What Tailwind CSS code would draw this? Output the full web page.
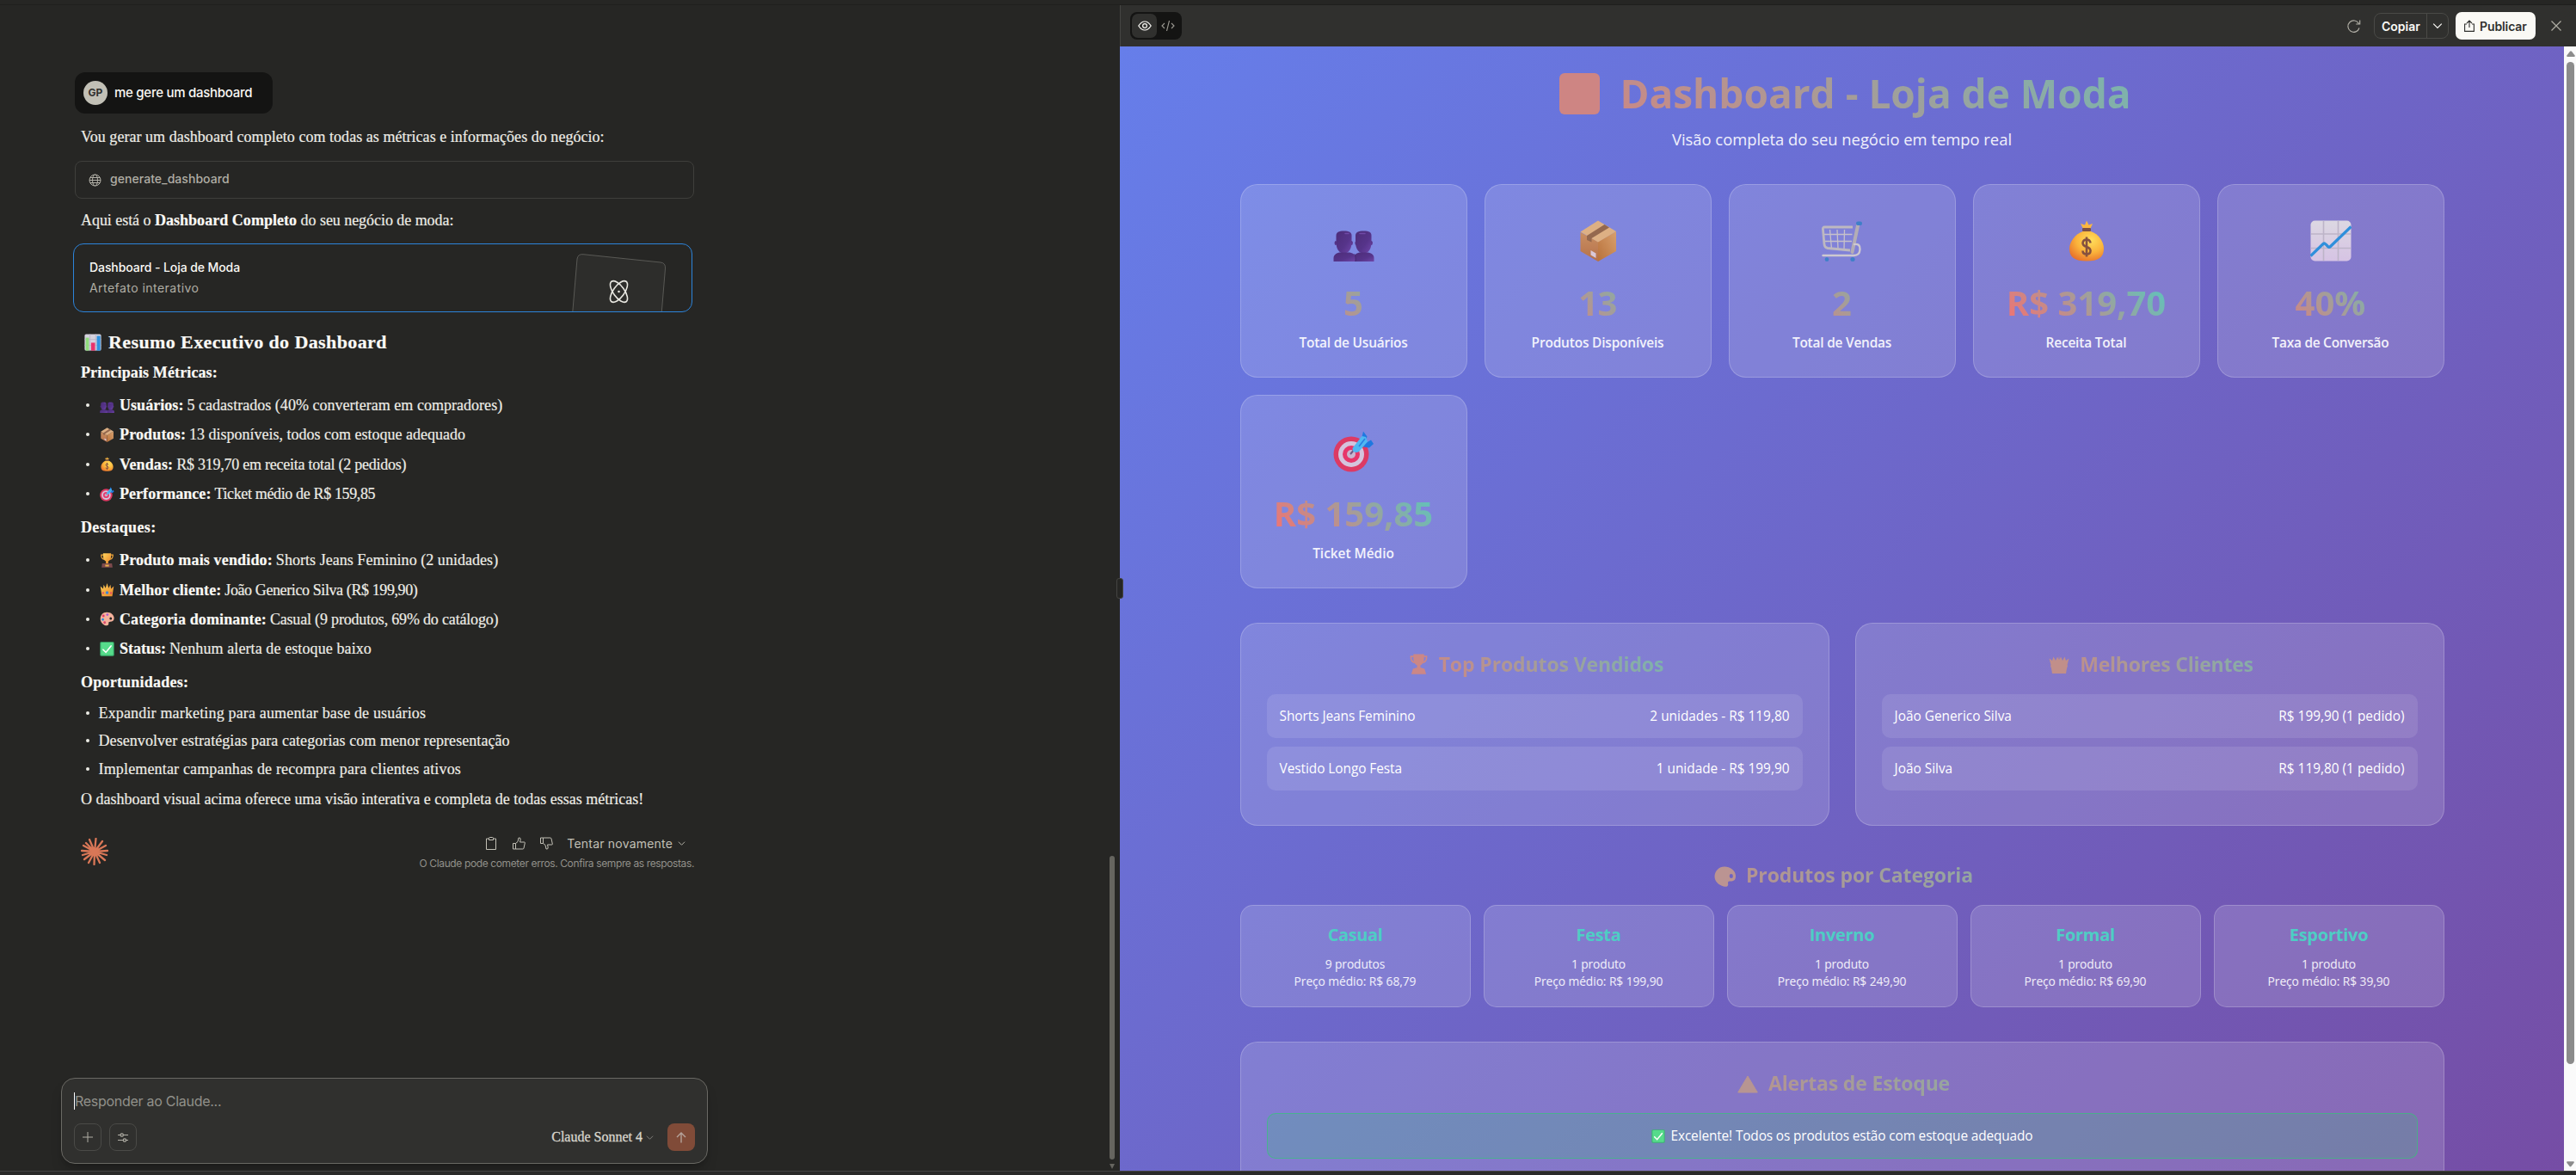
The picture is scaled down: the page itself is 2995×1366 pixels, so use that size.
<!DOCTYPE html>
<html lang="pt-BR">
<head>
<meta charset="utf-8">
<title>Dashboard - Loja de Moda</title>
<script src="https://cdn.jsdelivr.net/npm/@tailwindcss/browser@4"></script>
</head>
<body class="w-[2995px] h-[1366px] overflow-hidden bg-[#262624] font-['Inter',sans-serif] flex flex-col">
<svg class="absolute size-0">
  <defs>
    <linearGradient id="gUser" x1="0" y1="0" x2="1" y2="1"><stop offset="0" stop-color="#4c2c78"/><stop offset=".6" stop-color="#56348a"/><stop offset="1" stop-color="#6f45a8"/></linearGradient>
    <linearGradient id="gBoxL" x1="0" y1="0" x2="0" y2="1"><stop offset="0" stop-color="#c98f62"/><stop offset="1" stop-color="#b5704a"/></linearGradient>
    <linearGradient id="gBoxR" x1="0" y1="1" x2="1" y2="0"><stop offset="0" stop-color="#b8713a"/><stop offset="1" stop-color="#d8a06e"/></linearGradient>
    <radialGradient id="gBag" cx=".62" cy=".3" r=".75"><stop offset="0" stop-color="#ffdf5c"/><stop offset=".55" stop-color="#fbb33b"/><stop offset="1" stop-color="#e8742c"/></radialGradient>
    <linearGradient id="gChart" x1="0" y1="0" x2="0" y2="1"><stop offset="0" stop-color="#dcd8e2"/><stop offset="1" stop-color="#d6c3e4"/></linearGradient>
    <linearGradient id="gCup" x1="0" y1="0" x2="1" y2="1"><stop offset="0" stop-color="#ffd25a"/><stop offset="1" stop-color="#e8862a"/></linearGradient>
  </defs>
  <symbol id="users" viewBox="0 0 48 48">
    <g fill="url(#gUser)"><ellipse cx="27" cy="26.5" rx="1.6" ry="2.6"/><ellipse cx="44.5" cy="26.5" rx="1.4" ry="2.6"/><path d="M26 18c0-4 3-5.500 9.500-5.500S44.500 14 44.500 18v8c0 8-4 12.500-9 12.500S26 34 26 26z"/><path d="M24 48v-4c0-4 4-6.500 8-6.500h7c5 0 8.500 2.500 8.500 6.500v4z"/><ellipse cx="3" cy="26.500" rx="1.400" ry="2.600"/><ellipse cx="21.500" cy="26.500" rx="1.400" ry="2.600"/><path d="M3.500 18c0-4 3-5.500 9-5.500s9 1.500 9 5.500v8c0 8-4 12.500-9 12.500S3.500 34 3.500 26z"/><path d="M.5 48v-4c0-4 4-6.500 8-6.500h9c5 0 8.500 2.500 8.500 6.500v4z" /></g>
    <path d="M24.500 39c1 1.500 1.500 3 1.500 5v4h-1" fill="none" stroke="#432569" stroke-width=".8"/><path d="M14 15.500h4m13 0h6" stroke="#7049a6" stroke-width="1.500" stroke-linecap="round"/>
  </symbol>
  <symbol id="box" viewBox="0 0 48 48">
    <path d="M3.500 14L24 25v23L3.500 36z" fill="url(#gBoxL)"/><path d="M24 25l21-12v23L24 48z" fill="url(#gBoxR)"/><path d="M3.500 13.500L24 .5l21 12.500-21 12.500z" fill="#ddb084"/><path d="M11 18l20.500-13 5.500 3.500L16.500 21v4.500L11 23z" fill="#94684e"/><path d="M15.500 35l6 3.500v5.500l-6-3.500z" fill="#d9c8d8"/>
  </symbol>
  <symbol id="cart" viewBox="0 0 48 48">
    <g fill="none" stroke="#c6c1c9" stroke-width="1.300"><path d="M9.500 11l2 22M18 11l1 22M26.500 11l-.5 23M1.500 16.500h34M2 24.500h33"/></g>
    <path d="M36 8H3.500Q1 8 1.500 11l1.500 17q.3 4 4 4.500L33 35" fill="none" stroke="#bdb8c0" stroke-width="2.800"/><path d="M42.500 4L35.500 37" stroke="#b3adb5" stroke-width="4" stroke-linecap="round"/><path d="M38 28q7-1 6.500 6t-7 7H1.500" fill="none" stroke="#cdc8d0" stroke-width="2.400" stroke-linecap="round"/>
    <rect x="40" y="1.500" width="7" height="4.500" rx="2" fill="#3f7fc8"/><ellipse cx="6" cy="45.500" rx="2.300" ry="2.500" fill="#3f7fc8"/><ellipse cx="36" cy="45.500" rx="2.600" ry="2.500" fill="#3f7fc8"/>
  </symbol>
  <symbol id="bag" viewBox="0 0 48 48">
    <path d="M19.500 9L17 4l5 1.500L24 .5 26.500 5.500 31 4l-2.500 5.500z" fill="#fbb741"/><path d="M19.500 13h9.500C38 16 44 25 44 33c0 10-6 14.500-20 14.500S4 43 4 33c0-8 7-17 15.500-20z" fill="url(#gBag)"/><rect x="19" y="9" width="10" height="4" rx="1.200" fill="#7b4f45"/>
    <path d="M28.500 26.500q-.5-4-4.500-4t-4.500 4q0 3 4.500 4.500t4.500 4.500q0 4-4.500 4t-4.500-4M24 19.500v23" fill="none" stroke="#85513f" stroke-width="2.600"/>
  </symbol>
  <symbol id="trend" viewBox="0 0 48 48">
    <rect x=".5" y=".5" width="47" height="47" rx="5" fill="url(#gChart)"/><path d="M15.500 1v46M32.500 1v46M1 16h46M1 32.500h46" stroke="#bdb4c8" stroke-width="1.600"/><path d="M.5 41.500L15 27.500q1.500-1.200 3 .5l2.500 2.500q1.500 1.500 3 0L47.500 7.500" fill="none" stroke="#2f8fdb" stroke-width="3.200"/>
  </symbol>
  <symbol id="target" viewBox="0 0 48 48">
    <circle cx="21" cy="27" r="20.500" fill="#dd3a63"/><circle cx="21" cy="27" r="15" fill="#d4c4dd"/><circle cx="21" cy="27" r="10" fill="#e7366a"/><circle cx="21" cy="27" r="5" fill="#c9b6cf"/><path d="M20 27l5-6" stroke="#6f5a86" stroke-width="2"/>
    <path d="M33 9L35 .5l4.500 6-3 8zM38 14l6-3.500 3 4.500-5 4.500-7-1z" fill="#1f78e0"/><path d="M22.500 20l11-14 4.500 1 2 5.500L30 24q-4 2-7-.5z" fill="#4fb8f2"/><path d="M30 18l7-9" stroke="#2a7fe0" stroke-width="1.600"/>
  </symbol>
  <symbol id="check" viewBox="0 0 48 48"><rect x="1" y="1" width="46" height="46" rx="4" fill="#3cb572"/><rect x="4" y="3" width="40" height="41" rx="3" fill="#56db8b"/><path d="M11 26l9 9 17-21" fill="none" stroke="#fff" stroke-width="4.500" stroke-linecap="round"/></symbol>
  <symbol id="bars" viewBox="0 0 48 48"><rect x="1" y="1" width="46" height="46" rx="4" fill="#d5d2de"/><path d="M1 16h46M1 32h46M16 1v46M32 1v46" stroke="#b9b4c6" stroke-width="2"/><rect x="4" y="11" width="9" height="36" fill="#8fdc7c"/><rect x="19" y="25" width="11" height="22" fill="#e8336d"/><rect x="35" y="6" width="10" height="41" fill="#2f92e0"/></symbol>
  <symbol id="cup" viewBox="0 0 48 48"><path d="M12 6H5q-1 14 12 15M36 6h7q1 14-12 15" fill="none" stroke="#f0a63a" stroke-width="3.500"/><path d="M11 1h26v9q0 13-9 17v8h-8v-8q-9-4-9-17z" fill="url(#gCup)"/><path d="M8 34h32l2 13.500H6z" fill="#7d4a4c"/><rect x="18" y="38" width="12" height="6" fill="#e9b04a"/></symbol>
  <symbol id="crown" viewBox="0 0 48 48"><path d="M7 46L2 13l9 8 2-13 6 11L24 3l5 16 6-11 2 13 9-8-5 33z" fill="url(#gCup)"/><circle cx="24" cy="34" r="5" fill="#3f86d8"/><circle cx="11" cy="35" r="3" fill="#e0466c"/><circle cx="37" cy="35" r="3" fill="#e0466c"/></symbol>
  <symbol id="palette" viewBox="0 0 48 48"><path fill-rule="evenodd" d="M23 2C10 2 2 12 2 24c0 11 9 20 18 22 6 1 10-2 9-7-.500-4 1-6 5-6 8 0 13-3 13-11C47 10 36 2 23 2zm13 16a4 4.500 0 1 1 0 9 4 4.500 0 0 1 0-9z" fill="#f5b29c"/><circle cx="25" cy="10" r="4" fill="#a85fd0"/><circle cx="12" cy="14" r="4" fill="#e23b6b"/><circle cx="10" cy="26" r="4" fill="#2f8fdb"/><circle cx="16" cy="36" r="4" fill="#d8456c"/></symbol>
  <symbol id="chev" viewBox="0 0 10 10"><path d="M1 3l4 4 4-4" fill="none" stroke="currentColor" stroke-width="1"/></symbol>
</svg>

<div class="h-[5px] bg-[#262624]"></div>
<div class="h-px bg-[#1f1f1d]"></div>

<div class="h-[1355px] flex">
  <!-- conversation -->
  <section class="w-[1302px] h-full flex justify-between pt-[78px]">
    <div class="w-[830px] flex flex-col pl-[72px]">
      <div class="ml-[15px] w-[230px] h-12 rounded-xl bg-[#141413] flex items-center pl-[10px]">
        <div class="size-7 rounded-full bg-[#c2c0b6] text-[#30302e] text-[12px] font-bold flex items-center justify-center">GP</div>
        <div class="ml-2 text-[15px] font-medium text-[#faf9f5] tracking-[-0.27px]">me gere um dashboard</div>
      </div>
      <div class="font-['Liberation_Serif',serif] text-[18px] leading-6 text-[#edece6] whitespace-nowrap [-webkit-text-stroke:0.2px_currentColor]">
        <p class="ml-[22px] mt-[15px] tracking-[0.04px]">Vou gerar um dashboard completo com todas as métricas e informações do negócio:</p>
        <div class="ml-[15px] mt-4 w-[720px] h-11 rounded-lg border border-[#3f3f3c] flex items-center pl-[15px] font-['Inter',sans-serif] text-[14px] font-medium text-[#b0aea5] [-webkit-text-stroke:0]">
          <svg class="size-[15px]" viewBox="0 0 15 15" fill="none" stroke="currentColor" stroke-width="1"><circle cx="7.500" cy="7.500" r="6.500"/><ellipse cx="7.500" cy="7.500" rx="3" ry="6.500"/><path d="M1 7.500h13M2 4.500h11M2 10.500h11"/></svg>
          <span class="ml-[10px] -mt-[2px] tracking-[0.05px]">generate_dashboard</span>
        </div>
        <p class="ml-[22px] mt-[13px] tracking-[-0.05px]">Aqui está o <b class="text-[#faf9f5] tracking-[0.04px]">Dashboard Completo</b> do seu negócio de moda:</p>
        <div class="ml-[13px] mt-[15px] w-[720px] h-20 rounded-xl border border-[#2c84db] flex justify-between overflow-hidden font-['Inter',sans-serif] text-[14px] pl-[18px] [-webkit-text-stroke:0]">
          <div class="pt-[15px]">
            <p class="font-medium text-[#faf9f5] tracking-[-0.08px]">Dashboard - Loja de Moda</p>
            <p class="text-[#b0aea5] tracking-[0.46px]">Artefato interativo</p>
          </div>
          <svg class="w-[142px] h-[78px]" viewBox="0 0 142 78" fill="none">
            <path d="M3.500 82L9 17Q10 11 16 11.700L106 21Q112 21.700 111.500 28L107 82z" fill="#2d2d2b" stroke="#5a5a56"/>
            <g stroke="#e8e7e1" stroke-width="1.600"><ellipse cx="57.500" cy="55" rx="6.500" ry="14.500" transform="rotate(36 57.500 55)"/><ellipse cx="57.500" cy="55" rx="6.500" ry="14.500" transform="rotate(-36 57.500 55)"/></g><circle cx="57.500" cy="55" r="1.300" fill="#e8e7e1"/>
          </svg>
        </div>
        <div class="ml-[26px] mt-[21px] h-7 flex items-center text-[22px] leading-7 font-bold text-[#faf9f5]"><svg class="size-5 mr-2"><use href="#bars"/></svg><span class="tracking-[0.4px]">Resumo Executivo do Dashboard</span></div>
        <p class="ml-[22px] mt-[9px] font-bold text-[#faf9f5] tracking-[0.12px]">Principais Métricas:</p>
        <ul class="ml-[28px] mt-[14px] flex flex-col gap-[10.400px]">
          <li class="flex items-center h-6"><i class="size-1 rounded-full bg-[#edece6]"></i><svg class="ml-[12px] mr-[6px] size-[17px]"><use href="#users"/></svg><b class="text-[#faf9f5] mr-1 tracking-[0.05px]">Usuários:</b><span class="tracking-[0.03px]">5 cadastrados (40% converteram em compradores)</span></li>
          <li class="flex items-center h-6"><i class="size-1 rounded-full bg-[#edece6]"></i><svg class="ml-[12px] mr-[6px] size-[17px]"><use href="#box"/></svg><b class="text-[#faf9f5] mr-1 tracking-[0.15px]">Produtos:</b>13 disponíveis, todos com estoque adequado</li>
          <li class="flex items-center h-6"><i class="size-1 rounded-full bg-[#edece6]"></i><svg class="ml-[12px] mr-[6px] size-[17px]"><use href="#bag"/></svg><b class="text-[#faf9f5] mr-1 tracking-[0.12px]">Vendas:</b><span class="tracking-[-0.25px]">R$ 319,70 em receita total (2 pedidos)</span></li>
          <li class="flex items-center h-6"><i class="size-1 rounded-full bg-[#edece6]"></i><svg class="ml-[12px] mr-[6px] size-[17px]"><use href="#target"/></svg><b class="text-[#faf9f5] mr-1 tracking-[0.04px]">Performance:</b><span class="tracking-[-0.36px]">Ticket médio de R$ 159,85</span></li>
        </ul>
        <p class="ml-[22px] mt-[15px] font-bold text-[#faf9f5] tracking-[0.35px]">Destaques:</p>
        <ul class="ml-[28px] mt-[14px] flex flex-col gap-[10.400px]">
          <li class="flex items-center h-6"><i class="size-1 rounded-full bg-[#edece6]"></i><svg class="ml-[12px] mr-[6px] size-[17px]"><use href="#cup"/></svg><b class="text-[#faf9f5] mr-1 tracking-[0.15px]">Produto mais vendido:</b><span class="tracking-[0.04px]">Shorts Jeans Feminino (2 unidades)</span></li>
          <li class="flex items-center h-6"><i class="size-1 rounded-full bg-[#edece6]"></i><svg class="ml-[12px] mr-[6px] size-[17px]"><use href="#crown"/></svg><b class="text-[#faf9f5] mr-1 tracking-[0.08px]">Melhor cliente:</b><span class="tracking-[-0.4px]">João Generico Silva (R$ 199,90)</span></li>
          <li class="flex items-center h-6"><i class="size-1 rounded-full bg-[#edece6]"></i><svg class="ml-[12px] mr-[6px] size-[17px]"><use href="#palette"/></svg><b class="text-[#faf9f5] mr-1 tracking-[0.12px]">Categoria dominante:</b><span class="tracking-[-0.18px]">Casual (9 produtos, 69% do catálogo)</span></li>
          <li class="flex items-center h-6"><i class="size-1 rounded-full bg-[#edece6]"></i><svg class="ml-[12px] mr-[6px] size-[17px]"><use href="#check"/></svg><b class="text-[#faf9f5] mr-1">Status:</b><span class="tracking-[0.1px]">Nenhum alerta de estoque baixo</span></li>
        </ul>
        <p class="ml-[22px] mt-[15px] font-bold text-[#faf9f5] tracking-[0.22px]">Oportunidades:</p>
        <ul class="ml-[28px] mt-[11.500px] flex flex-col gap-[8.600px]">
          <li class="flex items-center h-6"><i class="size-1 rounded-full bg-[#edece6] mr-[10.500px]"></i><span class="tracking-[0.16px]">Expandir marketing para aumentar base de usuários</span></li>
          <li class="flex items-center h-6"><i class="size-1 rounded-full bg-[#edece6] mr-[10.500px]"></i><span class="tracking-[0.07px]">Desenvolver estratégias para categorias com menor representação</span></li>
          <li class="flex items-center h-6"><i class="size-1 rounded-full bg-[#edece6] mr-[10.500px]"></i><span class="tracking-[0.16px]">Implementar campanhas de recompra para clientes ativos</span></li>
        </ul>
        <p class="ml-[22px] mt-[10.500px]">O dashboard visual acima oferece uma visão interativa e completa de todas essas métricas!</p>
      </div>
      <div class="mt-[27px] ml-[22px] w-[713px] flex justify-between">
        <svg class="mt-[6px] size-8" viewBox="-16 -16 32 32" stroke="#d97757" stroke-width="2.300" stroke-linecap="round"><path d="M0 0L-6-14M0 0L1.500-15M0 0L9-12M0 0L13-7M0 0L15-1M0 0L14 4M0 0L12 10M0 0L6 13M0 0L-.5 15M0 0L-7 13M0 0L-12 9M0 0L-14 4M0 0L-15-1M0 0L-13-7M0 0L-10-10"/><circle r="3.500" fill="#d97757" stroke="none"/></svg>
        <div class="flex flex-col items-end text-[#c2c0b6]">
          <div class="h-[26px] flex items-center pr-[10px]">
            <svg class="w-3 h-[15px]" viewBox="0 0 12 15" fill="none" stroke="currentColor"><path d="M3.500 2H.5v12.500h11V2h-3M3.500 1.500q0-1 1-1h3q1 0 1 1v2h-5z"/></svg>
            <svg class="ml-[19px] size-[15px]" viewBox="0 0 15 15" fill="none" stroke="currentColor"><path d="M.5 7.500h3v6.500h-3zM3.500 7.500L6 5.500 7 1q2.500-.5 2.200 2L8.500 6h5q1 0 .8 1l-1.300 6q-.2 1-1.200 1H3.500"/></svg>
            <svg class="ml-[17px] size-[15px] rotate-180 -scale-x-100" viewBox="0 0 15 15" fill="none" stroke="currentColor"><path d="M.5 7.500h3v6.500h-3zM3.500 7.500L6 5.500 7 1q2.500-.5 2.200 2L8.500 6h5q1 0 .8 1l-1.300 6q-.2 1-1.200 1H3.500"/></svg>
            <span class="ml-[16px] text-[14px] leading-5 tracking-[0.2px]">Tentar novamente</span>
            <svg class="ml-[6px] size-[9px]"><use href="#chev"/></svg>
          </div>
          <p class="mt-[2px] text-[12px] leading-4 text-[#91908a] tracking-[-0.38px]">O Claude pode cometer erros. Confira sempre as respostas.</p>
        </div>
      </div>
      <div class="-ml-px mt-auto mb-[8px] w-[752px] h-[100px] rounded-2xl border border-[#6a6964] bg-[#30302e] shadow-lg shadow-black/20 flex flex-col pl-[14px] pr-[14px]">
        <div class="mt-[16px] h-5 flex items-center"><i class="w-px h-5 bg-white"></i><span class="text-[16px] text-[#91908a] tracking-[-0.28px]">Responder ao Claude...</span></div>
        <div class="mt-4 flex items-center text-[#b0aea5]">
          <div class="size-8 rounded-lg border border-[#4a4a47] flex items-center justify-center"><svg class="size-3" viewBox="0 0 12 12" stroke="currentColor"><path d="M6 0v12M0 6h12"/></svg></div>
          <div class="ml-[9px] size-8 rounded-lg border border-[#4a4a47] flex items-center justify-center"><svg class="w-3 h-[11px]" viewBox="0 0 12 11" fill="none" stroke="currentColor" stroke-width="1.200"><path d="M0 2.500h3M6.500 2.500H12M0 8.500h6M9.500 8.500H12"/><circle cx="4.700" cy="2.500" r="1.700"/><circle cx="7.900" cy="8.500" r="1.700"/></svg></div>
          <span class="ml-auto font-['Liberation_Serif',serif] text-[16px] text-[#d8d6cd] [-webkit-text-stroke:0.3px_#d8d6cd]">Claude Sonnet 4</span>
          <svg class="ml-1 size-[9px] text-[#8a8983]"><use href="#chev"/></svg>
          <div class="ml-[16px] size-8 rounded-lg bg-[#804b38] flex items-center justify-center"><svg class="w-3 h-[13px]" viewBox="0 0 12 13" fill="none" stroke="#b5a39b" stroke-width="1.400"><path d="M6 12.500V1M1 6l5-5 5 5"/></svg></div>
        </div>
      </div>
    </div>
    <div class="w-3 flex flex-col items-start justify-end">
      <div class="w-[6px] h-[353px] rounded-full bg-[#66655f]"></div>
      <svg class="mt-[5px] mb-[2px] w-[6px] h-[6px]" viewBox="0 0 6 6"><path d="M0 0h6L3 6z" fill="#66655f"/></svg>
    </div>
  </section>

  <!-- artifact -->
  <section class="relative w-[1693px] h-full flex flex-col">
    <header class="h-12 bg-[#30302e] border-l border-[#454542] flex items-center justify-between pl-[11px] pr-[17px] text-[14px] font-semibold">
      <div class="w-[60px] h-8 rounded-lg bg-[#141413] flex items-center p-[2px]">
        <div class="w-[29px] h-7 rounded-[7px] bg-[#30302e] flex items-center justify-center"><svg class="w-4 h-3" viewBox="0 0 16 12" fill="none" stroke="#faf9f5" stroke-width="1.200"><path d="M.8 6Q4 1 8 1t7.200 5Q12 11 8 11T.8 6z"/><circle cx="8" cy="6" r="2.400"/></svg></div>
        <svg class="ml-[5px] w-4 h-3" viewBox="0 0 16 12" fill="none" stroke="#9c9a92" stroke-width="1.100"><path d="M4 3L1 6l3 3M12 3l3 3-3 3M9.500 0l-3 12"/></svg>
      </div>
      <div class="flex items-center text-[#faf9f5]">
        <svg class="size-[17px]" viewBox="0 0 17 17" fill="none" stroke="#b0aea5" stroke-width="1.200"><path d="M15 10.500A6.700 6.700 0 1 1 14.500 5.500M15.700 1.500V6h-4.500"/></svg>
        <div class="ml-[15px] w-[87px] h-[30px] rounded-lg border border-[#4a4a47] flex items-center">
          <span class="pl-2 w-[61px] h-full border-r border-[#4a4a47] flex items-center">Copiar</span><svg class="ml-[6px] size-3"><use href="#chev"/></svg>
        </div>
        <div class="ml-2 w-[93px] h-8 rounded-[7px] bg-[#faf9f5] text-[#30302e] flex items-center pl-[10px]">
          <svg class="w-3 h-[14px]" viewBox="0 0 12 14" fill="none" stroke="currentColor" stroke-width="1.100"><path d="M3 5H.6v8.400h10.800V5H9M6 9V1M3 4l3-3 3 3"/></svg><span class="ml-[6px] tracking-[-0.1px]">Publicar</span>
        </div>
        <svg class="ml-[18px] size-3" viewBox="0 0 12 12" stroke="#b0aea5" stroke-width="1.200"><path d="M.5.5l11 11M11.500.5l-11 11"/></svg>
      </div>
    </header>
    <div class="h-[1307px] flex">
      <div class="w-[1679px] h-[1307px] overflow-hidden">
        <div class="h-[1428px] bg-[linear-gradient(135deg,#667eea_0%,#764ba2_100%)] flex justify-center font-['Open_Sans',sans-serif] text-white">
          <main class="w-[1400px] pt-5">
            <h1 class="h-[67px] flex items-center justify-center pl-2 text-[46px] font-bold text-transparent bg-clip-text bg-[linear-gradient(45deg,#ff6b6b,#4ecdc4)]"><svg class="w-[47px] h-12 mr-[23px] mt-[3px]"><rect width="47" height="48" rx="6" fill="#ce8583"/></svg><span class="pt-px">Dashboard - Loja de Moda</span></h1>
            <p class="mt-2 h-[26px] leading-[26px] text-center text-[18.400px] text-white/90">Visão completa do seu negócio em tempo real</p>

            <div class="mt-[39px] grid grid-cols-5 gap-5 text-[15.400px]">
              <div class="h-[225px] rounded-[20px] border border-white/20 bg-white/15 pt-[41px] px-6 text-center"><svg class="size-12 mx-auto"><use href="#users"/></svg><div class="mt-5 h-[55px] leading-[55px] text-[40px] font-bold text-transparent bg-clip-text bg-[linear-gradient(45deg,#ff6b6b,#4ecdc4)]">5</div><div class="mt-2 h-[22px] leading-[23px] font-semibold tracking-[-0.190px] text-white/90">Total de Usuários</div></div>
              <div class="h-[225px] rounded-[20px] border border-white/20 bg-white/15 pt-[41px] px-6 text-center"><svg class="size-12 mx-auto"><use href="#box"/></svg><div class="mt-5 h-[55px] leading-[55px] text-[40px] font-bold text-transparent bg-clip-text bg-[linear-gradient(45deg,#ff6b6b,#4ecdc4)] tracking-[-0.500px]">13</div><div class="mt-2 h-[22px] leading-[23px] font-semibold tracking-[-0.150px] text-white/90">Produtos Disponíveis</div></div>
              <div class="h-[225px] rounded-[20px] border border-white/20 bg-white/15 pt-[41px] px-6 text-center"><svg class="size-12 mx-auto"><use href="#cart"/></svg><div class="mt-5 h-[55px] leading-[55px] text-[40px] font-bold text-transparent bg-clip-text bg-[linear-gradient(45deg,#ff6b6b,#4ecdc4)]">2</div><div class="mt-2 h-[22px] leading-[23px] font-semibold tracking-[-0.190px] text-white/90">Total de Vendas</div></div>
              <div class="h-[225px] rounded-[20px] border border-white/20 bg-white/15 pt-[41px] px-6 text-center"><svg class="size-12 mx-auto"><use href="#bag"/></svg><div class="mt-5 h-[55px] leading-[55px] text-[40px] font-bold text-transparent bg-clip-text bg-[linear-gradient(45deg,#ff6b6b,#4ecdc4)]">R$ 319,70</div><div class="mt-2 h-[22px] leading-[23px] font-semibold tracking-[-0.150px] text-white/90">Receita Total</div></div>
              <div class="h-[225px] rounded-[20px] border border-white/20 bg-white/15 pt-[41px] px-6 text-center"><svg class="size-12 mx-auto"><use href="#trend"/></svg><div class="mt-5 h-[55px] leading-[55px] text-[40px] font-bold text-transparent bg-clip-text bg-[linear-gradient(45deg,#ff6b6b,#4ecdc4)]">40%</div><div class="mt-2 h-[22px] leading-[23px] font-semibold tracking-[-0.240px] text-white/90">Taxa de Conversão</div></div>
              <div class="h-[225px] rounded-[20px] border border-white/20 bg-white/15 pt-[41px] px-6 text-center"><svg class="size-12 mx-auto"><use href="#target"/></svg><div class="mt-5 h-[55px] leading-[55px] text-[40px] font-bold text-transparent bg-clip-text bg-[linear-gradient(45deg,#ff6b6b,#4ecdc4)]">R$ 159,85</div><div class="mt-2 h-[22px] leading-[23px] font-semibold text-white/90">Ticket Médio</div></div>
            </div>

            <div class="mt-10 grid grid-cols-2 gap-[30px] text-[15.400px]">
              <div class="h-[236px] rounded-[20px] border border-white/20 bg-white/15 p-[30px]">
                <h3 class="h-[33px] flex items-center justify-center pl-1 text-[23px] font-bold text-transparent bg-clip-text bg-[linear-gradient(45deg,#ff6b6b,#4ecdc4)]"><svg class="w-[23px] h-6 mr-3" viewBox="0 0 48 48" preserveAspectRatio="none"><path d="M12 6H5q-1 14 12 15M36 6h7q1 14-12 15" fill="none" stroke="#cc8786" stroke-width="3.500"/><path d="M11 1h26v9q0 13-9 17v5l10 3 4 12.500H6L10 35l10-3v-5q-9-4-9-17z" fill="#cc8786"/></svg><span class="pt-px tracking-[-0.110px]">Top Produtos Vendidos</span></h3>
                <div class="mt-[19px] h-[51px] rounded-[10px] bg-white/10 px-[15px] pt-px flex items-center justify-between"><span class="tracking-[-0.050px]">Shorts Jeans Feminino</span><span>2 unidades - R$ 119,80</span></div>
                <div class="mt-[10px] h-[51px] rounded-[10px] bg-white/10 px-[15px] pt-px flex items-center justify-between"><span class="tracking-[-0.050px]">Vestido Longo Festa</span><span>1 unidade - R$ 199,90</span></div>
              </div>
              <div class="h-[236px] rounded-[20px] border border-white/20 bg-white/15 p-[30px]">
                <h3 class="h-[33px] flex items-center justify-center pl-1 text-[23px] font-bold text-transparent bg-clip-text bg-[linear-gradient(45deg,#ff6b6b,#4ecdc4)]"><svg class="w-6 h-6 mr-3" viewBox="0 0 48 48"><path d="M8 46L6 34l-2-6 1-2L1 11l7 5 3-9 5 9 4-9 3 7 1-11 1 11 3-7 4 9 5-9 3 9 7-5-4 15 1 2-2 6-2 12z" fill="#c18f8a"/></svg><span class="pt-px tracking-[-0.240px]">Melhores Clientes</span></h3>
                <div class="mt-[19px] h-[51px] rounded-[10px] bg-white/10 px-[15px] pt-px flex items-center justify-between"><span>João Generico Silva</span><span>R$ 199,90 (1 pedido)</span></div>
                <div class="mt-[10px] h-[51px] rounded-[10px] bg-white/10 px-[15px] pt-px flex items-center justify-between"><span>João Silva</span><span>R$ 119,80 (1 pedido)</span></div>
              </div>
            </div>

            <h3 class="mt-10 h-[33px] flex items-center justify-center pl-1 text-[23px] font-bold text-transparent bg-clip-text bg-[linear-gradient(45deg,#ff6b6b,#4ecdc4)]"><svg class="w-[25px] h-6 mr-3 mt-1" viewBox="0 0 48 48" preserveAspectRatio="none"><path fill-rule="evenodd" d="M23 1C10 1 1 12 1 24c0 11 9 20 20 23 7 2 11-1 10-6-1-5 1-6 5-6 8 0 12-3 12-12C48 10 36 1 23 1zm15 17a4 5 0 1 1 0 10 4 5 0 0 1 0-10z" fill="#bb9492"/></svg><span class="pt-px tracking-[-0.110px]">Produtos por Categoria</span></h3>
            <div class="mt-[19px] grid grid-cols-5 gap-[15px] text-center text-[13.800px] leading-5 text-white/90">
              <div class="h-[119px] rounded-[15px] border border-white/20 bg-white/15 pt-5"><h4 class="h-[28px] leading-[28px] text-[20px] font-bold text-[#4ecdc4] tracking-[-0.4px]">Casual</h4><p class="mt-[10px] tracking-[-0.110px]">9 produtos</p><p class="tracking-[-0.070px]">Preço médio: R$ 68,79</p></div>
              <div class="h-[119px] rounded-[15px] border border-white/20 bg-white/15 pt-5"><h4 class="h-[28px] leading-[28px] text-[20px] font-bold text-[#4ecdc4] tracking-[-0.3px]">Festa</h4><p class="mt-[10px] tracking-[-0.110px]">1 produto</p><p class="tracking-[-0.070px]">Preço médio: R$ 199,90</p></div>
              <div class="h-[119px] rounded-[15px] border border-white/20 bg-white/15 pt-5"><h4 class="h-[28px] leading-[28px] text-[20px] font-bold text-[#4ecdc4] tracking-[-0.3px]">Inverno</h4><p class="mt-[10px] tracking-[-0.110px]">1 produto</p><p class="tracking-[-0.070px]">Preço médio: R$ 249,90</p></div>
              <div class="h-[119px] rounded-[15px] border border-white/20 bg-white/15 pt-5"><h4 class="h-[28px] leading-[28px] text-[20px] font-bold text-[#4ecdc4] tracking-[-0.3px]">Formal</h4><p class="mt-[10px] tracking-[-0.110px]">1 produto</p><p class="tracking-[-0.070px]">Preço médio: R$ 69,90</p></div>
              <div class="h-[119px] rounded-[15px] border border-white/20 bg-white/15 pt-5"><h4 class="h-[28px] leading-[28px] text-[20px] font-bold text-[#4ecdc4] tracking-[-0.25px]">Esportivo</h4><p class="mt-[10px] tracking-[-0.110px]">1 produto</p><p class="tracking-[-0.070px]">Preço médio: R$ 39,90</p></div>
            </div>

            <div class="mt-10 h-[177px] rounded-[20px] border border-white/20 bg-white/15 p-[30px]">
              <h3 class="h-[33px] flex items-center justify-center pl-1 text-[23px] font-bold text-transparent bg-clip-text bg-[linear-gradient(45deg,#ff6b6b,#4ecdc4)]"><svg class="w-6 h-[21px] mr-3 mt-1" viewBox="0 0 24 21"><path d="M12 1L23.300 20H.7z" fill="#b79592" stroke="#b79592" stroke-linejoin="round"/></svg><span class="pt-px tracking-[-0.170px]">Alertas de Estoque</span></h3>
              <div class="mt-[19px] h-[53px] rounded-[10px] border border-[#2ecc71]/60 bg-[#2ecc71]/20 flex items-center justify-center pt-px text-[15.400px]"><svg class="size-4 mr-[7px]"><use href="#check"/></svg><span class="tracking-[-0.130px]">Excelente! Todos os produtos estão com estoque adequado</span></div>
            </div>
          </main>
        </div>
      </div>
      <div class="w-[14px] bg-[#fafafa] flex flex-col items-center pl-px">
        <svg class="mt-[5px] w-[10px] h-[7px]" viewBox="0 0 10 7"><path d="M4 .8q1-1 2 0L9.700 5.500Q10 7 9 7H1Q0 7 .3 5.500z" fill="#8b8b8b"/></svg>
        <div class="mt-[6px] w-[9px] h-[1165px] rounded-full bg-[#8b8b8b]"></div>
        <svg class="mt-[113px] w-[9px] h-[7px]" viewBox="0 0 10 7"><path d="M4 6.200q1 1 2 0L9.700 1.500Q10 0 9 0H1Q0 0 .3 1.500z" fill="#8b8b8b"/></svg>
      </div>
    </div>
    <div class="absolute -left-1 top-[666px] w-2 h-6 rounded-[3px] border border-[#454542] bg-[#262624]"></div>
  </section>
</div>
<div class="h-[5px] bg-[#2a2a29] border-t border-[#454543] flex"></div>
</body>
</html>
